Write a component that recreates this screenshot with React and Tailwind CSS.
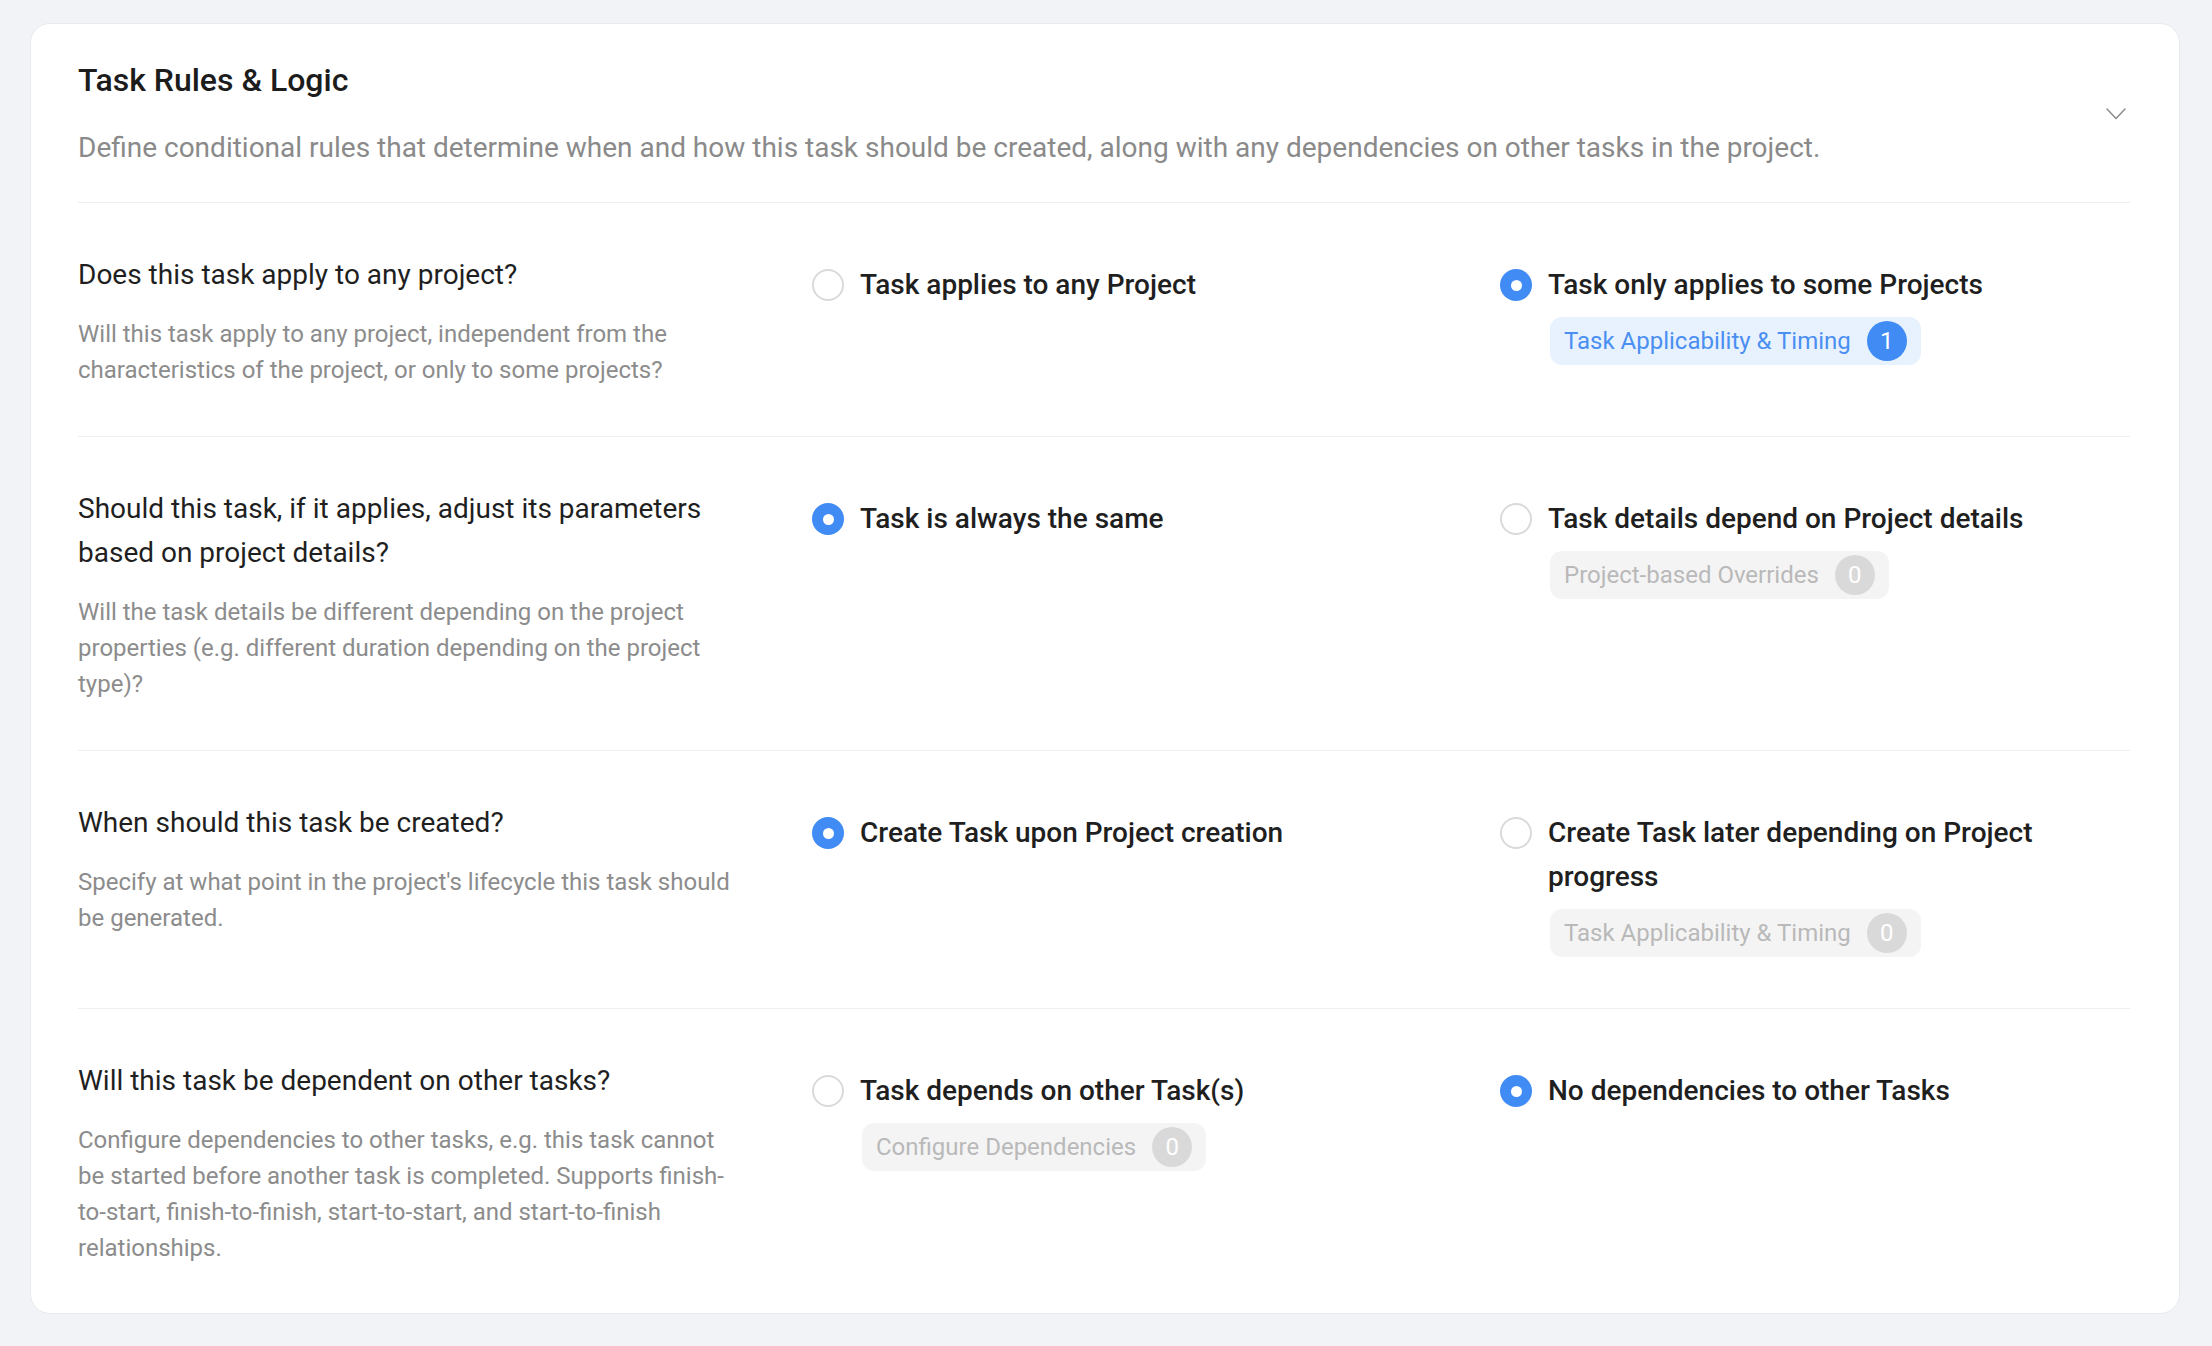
import React from 'react'

const rows = [
    {
        question: 'Does this task apply to any project?',
        hint: 'Will this task apply to any project, independent from the characteristics of the project, or only to some projects?',
        options: [
            { label: 'Task applies to any Project', checked: false },
            { label: 'Task only applies to some Projects', checked: true, chip: { text: 'Task Applicability & Timing', count: 1, active: true } },
        ],
    },
    {
        question: 'Should this task, if it applies, adjust its parameters based on project details?',
        hint: 'Will the task details be different depending on the project properties (e.g. different duration depending on the project type)?',
        options: [
            { label: 'Task is always the same', checked: true },
            { label: 'Task details depend on Project details', checked: false, chip: { text: 'Project-based Overrides', count: 0, active: false } },
        ],
    },
    {
        question: 'When should this task be created?',
        hint: "Specify at what point in the project's lifecycle this task should be generated.",
        options: [
            { label: 'Create Task upon Project creation', checked: true },
            { label: 'Create Task later depending on Project progress', checked: false, chip: { text: 'Task Applicability & Timing', count: 0, active: false } },
        ],
    },
    {
        question: 'Will this task be dependent on other tasks?',
        hint: 'Configure dependencies to other tasks, e.g. this task cannot be started before another task is completed. Supports finish-to-start, finish-to-finish, start-to-start, and start-to-finish relationships.',
        options: [
            { label: 'Task depends on other Task(s)', checked: false, chip: { text: 'Configure Dependencies', count: 0, active: false } },
            { label: 'No dependencies to other Tasks', checked: true },
        ],
    },
]

const Radio = ({ checked }) =>
    checked ? (
        <div className="w-[32px] h-[32px] rounded-full bg-[#418cf4] flex items-center justify-center">
            <div className="w-[11px] h-[11px] rounded-full bg-white" />
        </div>
    ) : (
        <div className="w-[32px] h-[32px] rounded-full border-2 border-[#dadada] bg-white" />
    )

const Chip = ({ text, count, active }) => (
    <div
        className={
            active
                ? 'inline-flex items-center gap-[16px] h-[48px] pl-[14px] pr-[14px] rounded-[12px] bg-[#e8f2fe] text-[#4a8ff1]'
                : 'inline-flex items-center gap-[16px] h-[48px] pl-[14px] pr-[14px] rounded-[12px] bg-[#f4f4f5] text-[#b9b9b9]'
        }
    >
        <span className="text-[24px] leading-none">{text}</span>
        <span
            className={
                active
                    ? 'w-[40px] h-[40px] rounded-full bg-[#418cf4] text-white text-[24px] leading-none flex items-center justify-center'
                    : 'w-[40px] h-[40px] rounded-full bg-[#d9d9d9] text-white text-[24px] leading-none flex items-center justify-center'
            }
        >
            {count}
        </span>
    </div>
)

const Option = ({ label, checked, chip }) => (
    <div className="flex items-start gap-[16px] pt-[10px]">
        <div className="h-[44px] flex items-center shrink-0">
            <Radio checked={checked} />
        </div>
        <div className="flex flex-col items-start">
            <span className="text-[28px] leading-[44px] font-medium text-[#1f1f1f]">{label}</span>
            {chip && (
                <div className="mt-[10px] mb-[3px] ml-[2px]">
                    <Chip {...chip} />
                </div>
            )}
        </div>
    </div>
)

export default function App() {
    return (
        <div className="min-h-screen bg-[#f2f3f7] pt-[23px] pl-[30px] pr-[32px] pb-[32px] font-['Roboto',sans-serif]">
            <div className="bg-white border border-[#e8eaef] rounded-[20px] pl-[47px] pr-[49px]">
                {/* Header */}
                <div className="flex items-center justify-between pt-[36px] pb-[34px] border-b border-[#eeeff2]">
                    <div>
                        <h2 className="text-[32px] leading-[40px] font-medium text-[#1c1c1c]">Task Rules &amp; Logic</h2>
                        <p className="mt-[28px] text-[28px] leading-[40px] text-[#8a8a8a]">
                            Define conditional rules that determine when and how this task should be created, along with any dependencies on other tasks in the project.
                        </p>
                    </div>
                    <svg width="20" height="12" viewBox="0 0 20 12" fill="none" className="mr-[4px] shrink-0">
                        <polyline points="1,1 10,10.5 19,1" stroke="#8c8c8c" strokeWidth="1.5" strokeLinecap="round" strokeLinejoin="round" />
                    </svg>
                </div>

                {/* Rules */}
                {rows.map((row, i) => (
                    <div
                        key={row.question}
                        className={
                            i < rows.length - 1
                                ? 'grid grid-cols-[660px_1fr] gap-x-[74px] pt-[50px] pb-[48px] border-b border-[#eeeff2]'
                                : 'grid grid-cols-[660px_1fr] gap-x-[74px] pt-[50px] pb-[47px]'
                        }
                    >
                        <div>
                            <h3 className="text-[28px] leading-[44px] text-[#1f1f1f]">{row.question}</h3>
                            <p className="mt-[19px] text-[24px] leading-[36px] text-[#8c8c8c]">{row.hint}</p>
                        </div>
                        <div className="grid grid-cols-[630px_630px] gap-x-[58px] items-start">
                            {row.options.map((opt) => (
                                <Option key={opt.label} {...opt} />
                            ))}
                        </div>
                    </div>
                ))}
            </div>
        </div>
    )
}
